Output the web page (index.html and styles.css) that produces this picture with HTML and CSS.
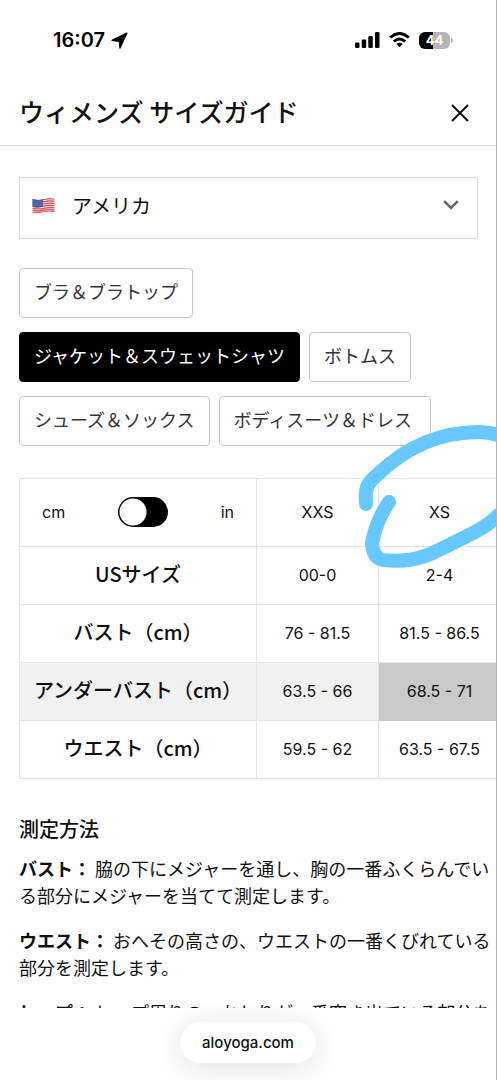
FILE: index.html
```html
<!DOCTYPE html>
<html lang="ja">
<head>
<meta charset="utf-8">
<meta name="viewport" content="width=device-width, initial-scale=1">
<title>ウィメンズ サイズガイド</title>
<link rel="stylesheet" href="styles.css">
</head>
<body>
<div class="status-bar">
  <div class="status-time">
    <span>16:07</span>
    <svg width="17" height="17" viewBox="0 0 17 17" aria-hidden="true"><path d="M15.800 1.200 1.200 8.400l7.200 1 .6 6.600z" fill="#000" stroke="#000" stroke-width="1.400" stroke-linejoin="round"/></svg>
  </div>
  <div class="status-icons">
    <svg width="25" height="16" viewBox="0 0 25 16" aria-hidden="true"><rect x="0" y="10.500" width="4.500" height="5.500" rx="1.200"/><rect x="6.700" y="7.500" width="4.500" height="8.500" rx="1.200"/><rect x="13.300" y="4" width="4.500" height="12" rx="1.200"/><rect x="20" y="0" width="4.500" height="16" rx="1.200"/></svg>
    <svg width="21" height="16" viewBox="0 0 21 16" aria-hidden="true"><g fill="none" stroke="#000" stroke-width="2.900"><path d="M1.200 5.500Q10.500-2.600 19.800 5.500"/><path d="M4.800 9.500Q10.500 4.600 16.200 9.500"/></g><path d="M7.400 12.100Q10.500 9.600 13.600 12.100L10.500 15.300z"/></svg>
    <div class="battery"><span>44</span></div>
  </div>
</div>
<header class="header">
  <h1>ウィメンズ サイズガイド</h1>
  <button class="close" type="button" aria-label="閉じる">
    <svg width="18" height="18" viewBox="0 0 18 18" aria-hidden="true"><path d="M1 1 17 17M17 1 1 17" stroke="#111" stroke-width="2"/></svg>
  </button>
</header>
<main class="content">
  <div class="country">
    <select aria-label="国">
      <option>アメリカ</option>
    </select>
    <svg class="flag" width="23" height="18" viewBox="0 0 23 18" aria-hidden="true">
      <defs><clipPath id="wave"><path d="M.5 2Q6 3.500 11.500 2T22.500 1.500V15Q17 14 11.500 15.300T.5 16z"/></clipPath></defs>
      <g clip-path="url(#wave)">
        <path fill="#f3dfe2" d="M0 0h23v18H0z"/>
        <g fill="none" stroke="#d5525e" stroke-width="1.250"><path d="M0 2.600Q6 4.100 11.500 2.600T23 2.100"/><path d="M0 4.800Q6 6.300 11.500 4.800T23 4.300"/><path d="M0 7Q6 8.500 11.500 7T23 6.500"/><path d="M0 9.200Q6 10.700 11.500 9.200T23 8.700"/><path d="M0 11.300Q6 12.500 11.500 11.300T23 10.800"/><path d="M0 13.400Q6 14.300 11.500 13.200T23 12.800"/><path d="M0 15.500Q6 15.900 11.500 14.900T23 14.700"/></g>
        <path fill="#3f5fa3" d="M0 1Q6 4 11 2V9.500Q6 11 0 10z"/>
        <path d="M1.500 4.200h9M2 6.200h9M1.500 8.200h9" stroke="#8fa2cf" stroke-width=".6" stroke-dasharray=".8 1.200"/>
      </g>
    </svg>
    <svg class="chevron" width="16" height="10" viewBox="0 0 16 10" aria-hidden="true"><path d="M1.200 1.200 8 8 14.800 1.200" fill="none" stroke="#666" stroke-width="2.600"/></svg>
  </div>
  <div class="tabs">
    <button type="button" class="tab">ブラ＆ブラトップ</button>
    <span class="tab-break"></span>
    <button type="button" class="tab tab-active">ジャケット＆スウェットシャツ</button>
    <button type="button" class="tab">ボトムス</button>
    <span class="tab-break"></span>
    <button type="button" class="tab">シューズ＆ソックス</button>
    <button type="button" class="tab">ボディスーツ＆ドレス&nbsp;</button>
  </div>
  <div class="sizes">
    <div class="table-wrap">
      <table>
        <colgroup><col class="col-label"><col class="col-size"><col class="col-size"></colgroup>
        <thead>
          <tr>
            <td><label class="units"><span>cm</span><input type="checkbox" role="switch" aria-label="単位"><span>in</span></label></td>
            <td>XXS</td><td>XS</td>
          </tr>
        </thead>
        <tbody>
          <tr><th scope="row">USサイズ</th><td>00-0</td><td>2-4</td></tr>
          <tr><th scope="row">バスト（cm）</th><td>76 - 81.5</td><td>81.5 - 86.5</td></tr>
          <tr class="row-active"><th scope="row">アンダーバスト（cm）</th><td>63.5 - 66</td><td class="cell-active">68.5 - 71</td></tr>
          <tr><th scope="row">ウエスト（cm）</th><td>59.5 - 62</td><td>63.5 - 67.5</td></tr>
        </tbody>
      </table>
    </div>
    <svg class="marker" width="142" height="148" viewBox="0 0 142 148" aria-hidden="true"><g fill="none" stroke="#66c8ff" stroke-width="14" stroke-linecap="round" stroke-linejoin="round"><path d="M11 80C10 65 11 60 22 51C52 22 86 8 124 8Q136 8 148 13"/><path d="M34 78C23 94 19 108 17 119Q18 134 28 136C50 138 64 136 84 126L120 108Q134 101 148 87"/></g></svg>
  </div>
  <section class="howto">
    <h2>測定方法</h2>
    <p><strong>バスト：</strong> 脇の下にメジャーを通し、胸の一番ふくらんでいる部分にメジャーを当てて測定します。</p>
    <p><strong>ウエスト：</strong> おへその高さの、ウエストの一番くびれている部分を測定します。</p>
    <p><strong>ヒップ：</strong> ヒップ周りの、おしりが一番突き出ている部分を測定します。</p>
  </section>
</main>
<footer class="browser-bar"><button type="button" class="address">aloyoga.com</button></footer>
</body>
</html>
```

FILE: styles.css
```css
* { box-sizing: border-box; }

body {
  margin: 0;
  height: 100vh;
  display: flex;
  flex-direction: column;
  overflow: hidden;
  background: #fff;
  border-right: 1px solid #b4b4b4;
  color: #111;
  font-family: "Noto Sans CJK JP", sans-serif;
}

button, select { font-family: inherit; color: inherit; }

.status-bar {
  flex: none;
  display: flex;
  justify-content: space-between;
  align-items: center;
  height: 80px;
  padding: 0 46px 0 53px;
  font-family: Inter, sans-serif;
}

.status-time {
  display: flex;
  align-items: center;
  gap: 6px;
  font-size: 20px;
  font-weight: 600;
  color: #000;
}

.status-icons { display: flex; align-items: center; gap: 9px; }

.battery {
  position: relative;
  width: 31px;
  height: 17px;
  border-radius: 6px;
  background: linear-gradient(90deg, #000 44%, #b5b5b5 44%);
  color: #fff;
  font-size: 13px;
  font-weight: 700;
  line-height: 17px;
  text-align: center;
}

.battery::after {
  content: "";
  position: absolute;
  right: -3px;
  top: 6px;
  width: 2px;
  height: 5px;
  border-radius: 0 2px 2px 0;
  background: #b5b5b5;
}

.header {
  flex: none;
  display: flex;
  justify-content: space-between;
  align-items: center;
  height: 66px;
  padding: 0 27px 0 19px;
  border-bottom: 1px solid #ddd;
}

h1 {
  margin: 0;
  padding-bottom: 4px;
  font-size: 25px;
  font-weight: 500;
  line-height: 36px;
}

.close {
  display: flex;
  padding: 0;
  border: 0;
  background: none;
}

.content {
  flex: 1;
  min-height: 0;
  overflow: hidden;
  padding: 31px 0 0 19px;
}

.country { position: relative; margin-right: 18px; }

.country select {
  display: block;
  width: 100%;
  height: 62px;
  padding: 0 52px 6px 52px;
  border: 1px solid #d8d8d8;
  border-radius: 0;
  appearance: none;
  background: #fff;
  font-size: 20px;
}

.flag { position: absolute; left: 13px; top: 20px; pointer-events: none; }
.chevron { position: absolute; right: 19px; top: 23px; pointer-events: none; }

.tabs {
  display: flex;
  flex-wrap: wrap;
  column-gap: 9px;
  margin-top: 29px;
}

.tab-break { flex-basis: 100%; height: 14px; }

.tab {
  height: 50px;
  padding: 0 14px 5px;
  border: 1px solid #c8c8c8;
  border-radius: 4px;
  background: #fff;
  color: #333;
  font-size: 18px;
}

.tab-active { background: #000; border-color: #000; color: #fff; }

.sizes { position: relative; margin-top: 32px; }
.table-wrap { overflow: hidden; }

table {
  width: 481px;
  table-layout: fixed;
  border-collapse: collapse;
}

.col-label { width: 237px; }
.col-size { width: 122px; }

th, td {
  height: 58px;
  padding: 0 0 2px;
  border: 1px solid #e4e4e4;
  text-align: center;
}

thead td { height: 68px; }

td { font-family: Inter, sans-serif; font-size: 16px; }
th { padding-bottom: 4px; font-size: 20px; font-weight: 500; }

.row-active { background: #f1f1f1; }
.cell-active { background: #cacaca; border-color: #cacaca; }

.units {
  display: flex;
  align-items: center;
  justify-content: space-between;
  padding: 0 22px;
}

.units input {
  width: 50px;
  height: 30px;
  margin: 0;
  appearance: none;
  border-radius: 15px;
  background: radial-gradient(circle at 15px 15px, #fff 13px, #000 14px);
}

.marker { position: absolute; right: -1px; top: -54px; pointer-events: none; }

.howto { padding-top: 34px; }

h2 { margin: 0 0 10px; font-size: 20px; font-weight: 500; line-height: 32px; }

p { margin: 0 0 18px; font-size: 18px; line-height: 27px; }

.browser-bar {
  flex: none;
  display: flex;
  justify-content: center;
  align-items: flex-start;
  height: 72px;
  padding-top: 14px;
  background: #fff;
}

.address {
  height: 41px;
  padding: 0 22px;
  border: 0;
  border-radius: 21px;
  background: #fff;
  box-shadow: 0 4px 32px rgba(0, 0, 0, 0.12);
  font-family: Inter, sans-serif;
  font-size: 15px;
  font-weight: 500;
}
```
